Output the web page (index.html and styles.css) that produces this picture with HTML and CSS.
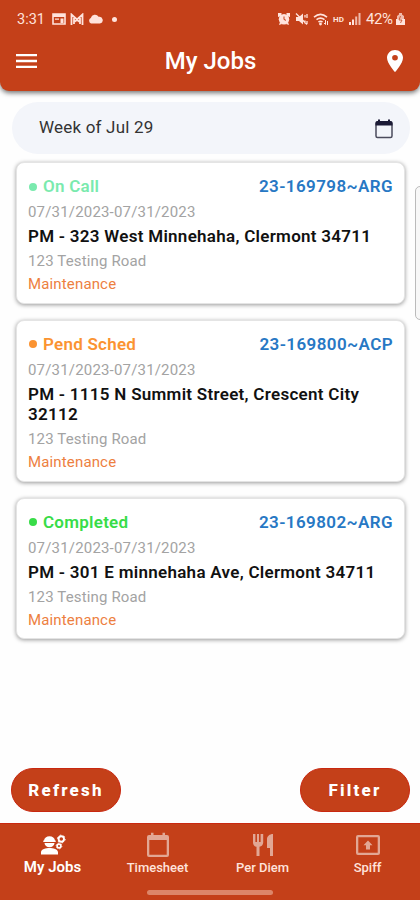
FILE: index.html
```html
<!DOCTYPE html>
<html lang="en">
<head>
  <meta charset="UTF-8">
  <meta name="viewport" content="width=device-width, initial-scale=1.0">
  <title>My Jobs</title>
  <link rel="stylesheet" href="styles.css">
</head>
<body>
  <div class="app">
    <header class="header">
      <div class="status-bar">
        <div class="status-left">
          <span class="clock">3:31</span>
          <svg class="icon-news" width="14" height="12" viewBox="0 0 14 12"><path fill="none" stroke="currentColor" stroke-width="1.6" d="M1 1h12v10H1z"/><path fill="currentColor" d="M1 1h12v3H1zM3 5.500h4v1.300H3zM8.500 5.500h3V10h-3z"/></svg>
          <svg class="icon-mail" width="14" height="12" viewBox="0 0 14 12"><path fill="none" stroke="currentColor" stroke-width="1.8" d="M1.500 12V1.500L7 6.500l5.500-5V12M4 11V5M10 11V5M4 9l3-2 3 2"/></svg>
          <svg class="icon-cloud" width="15" height="10" viewBox="0 0 15 10"><path fill="currentColor" d="M3 9.500A3 3 0 0 1 2.800 4 4.300 4.300 0 0 1 10.600 2.800 3.400 3.400 0 0 1 12 9.500z"/></svg>
          <span class="more-dot"></span>
        </div>
        <div class="status-right">
          <svg class="icon-alarm" width="12" height="12" viewBox="0 0 12 12"><circle cx="6" cy="6.200" r="5.200" fill="currentColor"/><path fill="currentColor" d="M0 0h3.500v3L0 4zM12 0H8.500v3L12 4zM1 12l1-3 2 2zM11 12l-1-3-2 2z"/><path fill="none" stroke="#c44019" stroke-width="1" d="M6 3.500v3l2 .8"/></svg>
          <svg class="icon-mute" width="13" height="12" viewBox="0 0 13 12"><path fill="currentColor" d="M1 4h3l4-3.500v11L4 8H1z"/><path fill="none" stroke="currentColor" stroke-width="1.300" d="M1 .500l11 11M10 2v2.500M12 1v4M10 7.500v3M12 8v3"/></svg>
          <svg class="icon-wifi" width="16" height="13" viewBox="0 0 16 13"><path fill="none" stroke="currentColor" stroke-width="1.600" d="M1 4.200Q7.500-1.400 14 4.200M3.500 6.700q4-3.200 8 0M5.500 9q2-1.500 4 0"/><path fill="none" stroke="currentColor" d="M12.500 7v4.500M11 10l1.500 1.500M14.500 12V8"/><circle cx="7.500" cy="11" r="1.400" fill="currentColor"/></svg>
          <span class="hd">HD</span>
          <svg class="icon-signal" width="12" height="12" viewBox="0 0 12 12"><path fill="currentColor" d="M0 9h2v3H0zM3 6.500h2V12H3z"/><path fill="currentColor" opacity=".75" d="M6.200 3.500h2V12h-2zM9.500 0h2v12h-2z"/></svg>
          <span class="battery-text">42%</span>
          <svg class="icon-battery" width="9" height="12" viewBox="0 0 9 12"><path fill="currentColor" opacity=".75" d="M3 0h3v1.500L8 3v3H1V3l2-1.500z"/><path fill="currentColor" d="M0 6h9v6H0z"/><path fill="none" stroke="#c44019" stroke-width=".8" d="M4.500 3L3 7h3l-1.500 3"/></svg>
        </div>
      </div>
      <div class="title-bar">
        <svg class="icon-menu" width="21" height="14" viewBox="0 0 21 14"><path fill="currentColor" d="M0 0h21v2.300H0zM0 5.850h21v2.300H0zM0 11.700h21V14H0z"/></svg>
        <h1>My Jobs</h1>
        <svg class="icon-pin" width="16" height="22" viewBox="5 2 14 20" preserveAspectRatio="none"><path fill="currentColor" d="M12 2C8.130 2 5 5.130 5 9c0 5.250 7 13 7 13s7-7.750 7-13c0-3.870-3.130-7-7-7zm0 9.500a2.500 2.500 0 0 1 0-5 2.500 2.500 0 0 1 0 5z"/></svg>
      </div>
    </header>

    <main class="content">
      <div class="week-picker">
        <span>Week of Jul 29</span>
        <svg width="18" height="20" viewBox="0 0 18 20"><rect x="1" y="3" width="16" height="15.500" rx="1.500" fill="none" stroke="#4b4b5c" stroke-width="1.500"/><path fill="#1c1b36" d="M.5 6.500V4Q.5 2 2.500 2H3V.5h2V2h8V.5h2V2h.5q2 0 2 2v2.500z"/></svg>
      </div>

      <div class="job-list">
        <div class="job-card">
          <div class="job-top">
            <span class="job-status on-call">On Call</span>
            <span class="job-number">23-169798~ARG</span>
          </div>
          <div class="job-dates">07/31/2023-07/31/2023</div>
          <div class="job-title">PM - 323 West Minnehaha, Clermont 34711</div>
          <div class="job-address">123 Testing Road</div>
          <div class="job-type">Maintenance</div>
        </div>

        <div class="job-card">
          <div class="job-top">
            <span class="job-status pending">Pend Sched</span>
            <span class="job-number">23-169800~ACP</span>
          </div>
          <div class="job-dates">07/31/2023-07/31/2023</div>
          <div class="job-title">PM - 1115 N Summit Street, Crescent City 32112</div>
          <div class="job-address">123 Testing Road</div>
          <div class="job-type">Maintenance</div>
        </div>

        <div class="job-card">
          <div class="job-top">
            <span class="job-status completed">Completed</span>
            <span class="job-number">23-169802~ARG</span>
          </div>
          <div class="job-dates">07/31/2023-07/31/2023</div>
          <div class="job-title">PM - 301 E minnehaha Ave, Clermont 34711</div>
          <div class="job-address">123 Testing Road</div>
          <div class="job-type">Maintenance</div>
        </div>
      </div>

      <div class="actions">
        <button class="btn">Refresh</button>
        <button class="btn">Filter</button>
      </div>
    </main>

    <nav class="tab-bar">
      <div class="tabs">
        <a class="tab active">
          <svg width="26" height="24" viewBox="0 0 26 24"><path fill="currentColor" d="M1 21.500v-2.200C1 16.200 6 15 9.500 15s8.500 1.200 8.500 4.300v2.200zM4 7.500C4.300 5 6.500 3.200 9.500 3.200S14.700 5 15 7.500h.7V9H3.300V7.500zM4.500 10h10a5 4.200 0 0 1-10 0z"/><circle cx="21.300" cy="6" r="2.700" fill="none" stroke="currentColor" stroke-width="1.900"/><circle cx="21.300" cy="6" r="3.900" fill="none" stroke="currentColor" stroke-width="1" stroke-dasharray="1.500 2.580"/><circle cx="19" cy="13" r="1.900" fill="none" stroke="currentColor" stroke-width="1.700"/><circle cx="19" cy="13" r="2.900" fill="none" stroke="currentColor" stroke-width=".8" stroke-dasharray="1.200 1.840"/></svg>
          <span>My Jobs</span>
        </a>
        <a class="tab">
          <svg width="24" height="26" viewBox="0 0 24 26"><path fill="currentColor" fill-rule="evenodd" d="M3 3h2V.7h2.500V3h9V.7H19V3h2q2 0 2 2v18q0 2-2 2H3q-2 0-2-2V5q0-2 2-2zm.3 5v14.700h17.400V8z"/></svg>
          <span>Timesheet</span>
        </a>
        <a class="tab">
          <svg width="22" height="24" viewBox="0 0 22 24"><path fill="currentColor" d="M8.600 9H7V1H5v8H3.400V1H1v8.500c0 2.300 1.500 4 3.500 4.300V23h3v-9.200c2-.3 3.700-2 3.700-4.300V1H8.600zM15 6v9h3v8h3V1c-3.300 0-6 2.200-6 5z"/></svg>
          <span>Per Diem</span>
        </a>
        <a class="tab">
          <svg width="26" height="24" viewBox="0 0 26 24"><path fill="currentColor" fill-rule="evenodd" d="M3 2h20q2 0 2 2v16q0 2-2 2H3q-2 0-2-2V4q0-2 2-2zm.3 2.200v15.600h19.400V4.200zM13 7.500l4.500 4.800H15V16.500h-4v-4.200H8.500z"/></svg>
          <span>Spiff</span>
        </a>
      </div>
      <div class="home-indicator"></div>
    </nav>

    <div class="edge-handle"></div>
  </div>
</body>
</html>
```

FILE: styles.css
```css
* {
  box-sizing: border-box;
}

body {
  margin: 0;
  font-family: Roboto, Arial, sans-serif;
  background-color: #fefefe;
}

.app {
  position: relative;
  display: flex;
  flex-direction: column;
  height: 900px;
  overflow: hidden;
}

svg {
  display: block;
  flex: none;
}

.header {
  height: 91px;
  background-color: #c44019;
  color: #fff;
  border-radius: 0 0 9px 9px;
  box-shadow: 0 2px 5px rgba(0, 0, 0, 0.55);
}

.status-bar {
  display: flex;
  justify-content: space-between;
  height: 38px;
  padding: 0 15px 0 17px;
  color: #ffe3dc;
}

.status-left,
.status-right {
  display: flex;
  align-items: center;
}

.clock {
  width: 35px;
  font-size: 14.5px;
}

.icon-mail {
  margin-left: 4px;
}

.icon-cloud {
  margin-left: 4px;
}

.more-dot {
  width: 5px;
  height: 5px;
  margin-left: 9px;
  border-radius: 50%;
  background-color: #ffe3dc;
}

.icon-mute {
  margin-left: 5px;
}

.icon-wifi {
  margin-left: 5px;
}

.hd {
  width: 12px;
  margin-left: 4px;
  font-size: 8px;
  font-weight: 700;
}

.icon-signal {
  margin-left: 4px;
}

.battery-text {
  width: 28px;
  margin-left: 5px;
  font-size: 15px;
  letter-spacing: -0.4px;
}

.icon-battery {
  margin-left: 2px;
}

.title-bar {
  display: grid;
  grid-template-columns: 30px 1fr 28px;
  align-items: center;
  height: 46px;
  padding: 0 17px 0 16px;
}

.title-bar h1 {
  margin: 0;
  font-size: 24px;
  font-weight: 500;
  text-align: center;
}

.icon-pin {
  justify-self: end;
}

.content {
  flex: 1;
  display: flex;
  flex-direction: column;
}

.week-picker {
  display: flex;
  justify-content: space-between;
  align-items: center;
  height: 52px;
  margin: 11px 10px 0 12px;
  padding: 0 17px 2px 27px;
  border-radius: 26px;
  background-color: #f3f5fa;
  color: #333;
  font-size: 17px;
  letter-spacing: 0.2px;
}

.week-picker svg {
  margin-top: 3px;
}

.job-list {
  display: flex;
  flex-direction: column;
  gap: 16px;
  margin: 8px 15px 0 16px;
}

.job-card {
  padding: 12px 12px 9px 11px;
  border: 1px solid #e4e4e4;
  border-radius: 8px;
  background-color: #fff;
  box-shadow: 0 1px 4px rgba(0, 0, 0, 0.4);
  line-height: 20px;
}

.job-top {
  display: flex;
  justify-content: space-between;
  height: 22px;
  line-height: 22px;
  font-size: 17px;
  font-weight: 600;
}

.job-status {
  display: flex;
  align-items: center;
  letter-spacing: 0.25px;
}

.job-status::before {
  content: "";
  width: 8px;
  height: 8px;
  margin: 1px 6px 0 1px;
  border-radius: 50%;
  background-color: currentColor;
}

.on-call {
  color: #7aeaae;
}

.pending {
  color: #fb9331;
}

.completed {
  color: #38dc48;
}

.job-number {
  margin-right: -1px;
  color: #2778c4;
  letter-spacing: 0.4px;
}

.job-dates {
  margin-top: 5px;
  color: #a3a3a3;
  font-size: 15px;
  letter-spacing: 0.18px;
}

.job-title {
  margin-top: 4px;
  color: #111;
  font-size: 17px;
  font-weight: 600;
  letter-spacing: 0.28px;
  line-height: 20.5px;
}

.job-address {
  margin-top: 4.5px;
  color: #a3a3a3;
  font-size: 15px;
  letter-spacing: 0.15px;
}

.job-type {
  margin-top: 3px;
  margin-bottom: -0.5px;
  color: #ed803f;
  font-size: 15px;
  letter-spacing: 0.15px;
}

.actions {
  display: flex;
  justify-content: space-between;
  margin: auto 10px 11px 11px;
}

.btn {
  width: 110px;
  height: 44px;
  padding: 0;
  border: 1px solid #c92810;
  border-radius: 22px;
  background-color: #c44019;
  color: #fff;
  font-family: inherit;
  font-size: 17px;
  font-weight: 800;
  letter-spacing: 2.2px;
}

.tab-bar {
  height: 77px;
  border-top: 1px solid #c92810;
  background-color: #c44019;
}

.tabs {
  display: grid;
  grid-template-columns: repeat(4, 1fr);
  height: 66px;
  padding-top: 8px;
}

.tab {
  display: flex;
  flex-direction: column;
  align-items: center;
  color: #e2a794;
}

.tab svg {
  height: 26px;
}

.tab span {
  color: #ffe3dc;
  font-size: 13px;
  font-weight: 500;
  line-height: 20px;
}

.tab.active,
.tab.active span {
  color: #fff;
}

.tab.active span {
  font-size: 15px;
  font-weight: 600;
  line-height: 19px;
}

.home-indicator {
  width: 126px;
  height: 5px;
  margin: 0 auto;
  border-radius: 3px;
  background-color: #dc8669;
}

/* side panel handle peeking in from the right edge */
.edge-handle {
  position: absolute;
  top: 186px;
  right: -6px;
  width: 11px;
  height: 134px;
  border: 1px solid #bbb;
  border-radius: 5px;
  background-color: #f8f8f8;
}
```
